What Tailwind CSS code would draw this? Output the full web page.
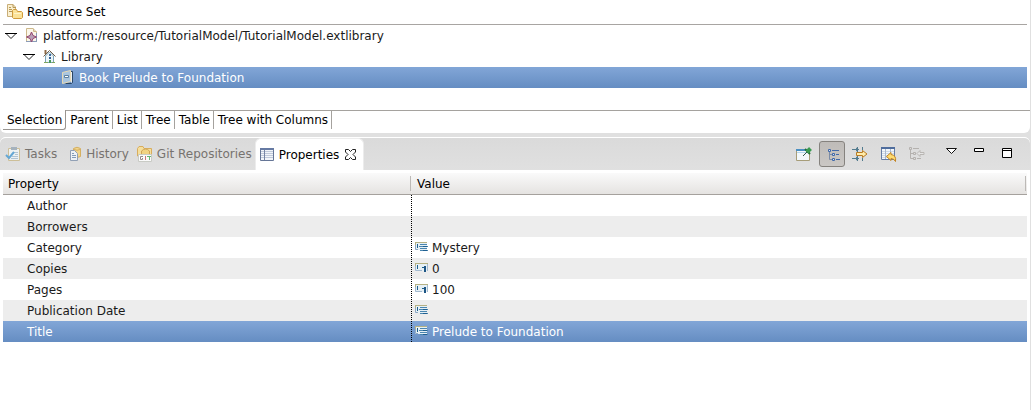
<!DOCTYPE html>
<html lang="en">
<head>
  <meta charset="UTF-8" />
  <meta name="viewport" content="width=device-width, initial-scale=1.0" />
  <title>Resource Set</title>
  <script src="https://cdn.jsdelivr.net/npm/@tailwindcss/browser@4"></script>
</head>
<body class="bg-[#e0e0e0] min-h-screen flex flex-col gap-1 pr-px font-['DejaVu_Sans',sans-serif] text-[12px] leading-5 text-[#1a1a1a] whitespace-nowrap">

  <!-- value cell icons -->
  <svg class="hidden">
    <symbol id="text-icon" viewBox="0 0 13 10">
      <rect width="12" height="8" fill="#e6f0f5" />
      <path d="M0 .5H12M.5 0V4" stroke="#b5b184" />
      <path d="M.5 3V7.500H3" fill="none" stroke="#8ea9c4" />
      <path d="M2.500 2V6" stroke="#1d5f8c" />
      <path d="M5 2.500H12M4 4.500H13M5 6.500H12M5 8.500H13" stroke="#4a86b0" />
      <path d="M8 4.500H12M8 8.500H12" stroke="#1f5f90" />
    </symbol>
    <symbol id="number-icon" viewBox="0 0 13 10">
      <rect width="13" height="8" fill="#e6f0f5" />
      <path d="M0 .5H13M.5 0V4" stroke="#b5b184" />
      <path d="M.5 3V7.500H7M12.500 1V8" fill="none" stroke="#a3bad0" />
      <path d="M2.500 2V6M7 4.500H9" stroke="#1d5f8c" />
      <path d="M9 3h2v6h-2z" fill="#1d5585" />
    </symbol>
  </svg>

  <section class="bg-white rounded-b-md h-[133px] flex flex-col">
    <h1 class="mx-[3px] pl-1 h-[25px] border-b border-[#a8a5a2] flex items-center gap-1 text-black">
      <svg class="size-4" viewBox="0 0 16 16">
        <path d="M.5 .5H6L8.500 3V12.500H.5Z" fill="#fbf0cf" stroke="#c9ae78" />
        <path d="M6 .5V3.500H9M2 3.500H4M2 5.500H5M2 7.500H5" fill="none" stroke="#b69859" />
        <path d="M5.500 13.500V6.500L6.500 5.500H9.500L10.500 7.500H14.500L15.500 8.500V13.500L14.500 14.500H6.500Z" fill="#fbe298" stroke="#d09a3c" />
        <path d="M7 9.500H14" stroke="#fff3c7" />
      </svg>
      Resource Set
    </h1>

    <ul class="mx-[3px]">
      <li class="h-[21px] pt-px pl-[2px] flex items-center">
        <svg class="w-3 h-2 mr-2" viewBox="0 0 12 8"><path d="M1 1.500L6 6.500L11 1.500" fill="#fff" stroke="#222" /><path d="M0 1.500H12" stroke="#000" /></svg>
        <svg class="size-4 mr-[2px]" viewBox="0 0 16 16">
          <path d="M1.500 .5H8L11.500 4V13.500H1.500Z" fill="#fbf7ea" stroke="#cdb88a" />
          <path d="M8.500 .5V3.500H11.500" fill="none" stroke="#cdb88a" />
          <path d="M1 13.500H12M11.500 5V13" stroke="#8a9bb8" />
          <path d="M6.500 4L8 7.500L11.500 9L8 10.500L6.500 14L5 10.500L1.500 9L5 7.500Z" fill="#b9a0b8" stroke="#94476f" />
        </svg>
        platform:/resource/TutorialModel/TutorialModel.extlibrary
      </li>
      <li class="h-[21px] pt-px pl-5 flex items-center">
        <svg class="w-3 h-2 mr-2" viewBox="0 0 12 8"><path d="M1 1.500L6 6.500L11 1.500" fill="#fff" stroke="#222" /><path d="M0 1.500H12" stroke="#000" /></svg>
        <svg class="size-4 mr-[2px]" viewBox="0 0 16 16">
          <path d="M2.500 1V5" stroke="#8d6b48" stroke-width="2" />
          <path d="M2.500 7V13.500H10.500V7L6.500 3Z" fill="#edf6fa" stroke="#7ba3b8" />
          <path d="M.5 7.500L6.500 1.500L12.500 7.500" fill="none" stroke="#6e5c48" />
          <path d="M6 5h2v2h-2z" fill="#416d9f" />
          <path d="M6 8h2v2h-2z" fill="#315d92" /><path d="M6 11h2v3h-2z" fill="#4b9a5b" />
          <path d="M1 13.500H5M9 13.500H12" stroke="#7fa65d" />
        </svg>
        Library
      </li>
      <li class="h-[21px] pt-px pl-[58px] flex items-center gap-[2px] text-white bg-linear-to-b from-[#82a6d7] to-[#658dc2]">
        <svg class="size-4" viewBox="0 0 16 16">
          <path d="M9.500 1.500H11.500V12.500L10.500 13.500H4.500" fill="none" stroke="#2c4763" />
          <path d="M1.500 2.500L9.500 .5V11.500L1.500 13.500Z" fill="#a9c5df" stroke="#e6d9b5" />
          <path d="M10.500 2V12.500" stroke="#e9eff6" />
          <path d="M3.500 5.500H7.500V7.500H3.500Z" fill="#fff" stroke="#5b7f9f" />
        </svg>
        Book Prelude to Foundation
      </li>
    </ul>

    <!-- page tabs -->
    <nav class="mt-[22px] pl-[3px] h-5 flex text-black leading-[19px]">
      <button class="h-5 pt-px pl-1 pr-[3px] border-r border-b border-[#999590] rounded-br-[3px]">Selection</button>
      <div class="grow h-[19px] border-t border-[#a5a29e] flex">
        <button class="pl-1 pr-[3px] border-r border-[#a5a29e]">Parent</button>
        <button class="pl-1 pr-[3px] border-r border-[#a5a29e]">List</button>
        <button class="pl-1 pr-[3px] border-r border-[#a5a29e]">Tree</button>
        <button class="pl-1 pr-[3px] border-r border-[#a5a29e]">Table</button>
        <button class="pl-1 pr-[3px] border-r border-[#a5a29e]">Tree with Columns</button>
      </div>
    </nav>
  </section>

  <section class="grow bg-white rounded-t-md flex flex-col">
    <header class="h-[33px] border-t border-white rounded-t-md bg-linear-to-b from-[#dadada] to-[#e0e0e0] flex justify-between">
      <nav class="flex text-[#77736f]">
        <button class="pl-[5px] flex items-center gap-1">
          <svg class="size-4" viewBox="0 0 16 16">
            <path d="M3.500 2.500H14.500V14.500H3.500Z" fill="#edf1f2" stroke="#cdbf98" />
            <path d="M6 1h6v3h-6z" fill="#a5b2bd" />
            <path d="M9 6.500H13M10 8.500H13M7 10.500H13M6 12.500H13" stroke="#b0c3d3" />
            <path d="M1 9L4 12L9 6" fill="none" stroke="#64a7d4" stroke-width="2" />
          </svg>
          Tasks
        </button>
        <button class="pl-[11px] flex items-center gap-[2px]">
          <svg class="size-4" viewBox="0 0 16 16">
            <path d="M5.500 2.500Q9 0 12.500 2.500V10.500Q9 12.500 5.500 10.500Z" fill="#f1d58c" stroke="#d4af61" />
            <path d="M6 3.500Q9 5 12 3.500" fill="none" stroke="#d4af61" />
            <path d="M2.500 4.500H6.500L9.500 7.500V14.500H2.500Z" fill="#eef2f5" stroke="#91a0b5" />
            <path d="M4 7.500H6M4 9.500H8M4 11.500H8" stroke="#829bb8" />
          </svg>
          History
        </button>
        <button class="pl-2 flex items-center gap-1">
          <svg class="size-4" viewBox="0 0 16 16">
            <path d="M.5 10V2.500L2 .5H6L7 2.500H14.500V10Z" fill="#f5df9d" stroke="#d8ad5e" />
            <path d="M4.500 8V5Q8.500 1 12.500 5V8" fill="#f1d382" stroke="#d0a557" />
            <path d="M1.500 8.500H14.500V15.500H1.500Z" fill="#fafafa" stroke="#c9cbc5" />
            <path d="M6 10.500H3.500V13.500H5.500V12" fill="none" stroke="#968b8b" />
            <path d="M8.500 10V14" stroke="#cc7777" /><path d="M10 10.500H14M12.500 10V14" stroke="#65b777" />
          </svg>
          Git Repositories
        </button>
        <button class="ml-[3px] pl-1 pr-[7px] flex items-center bg-white border-t border-l border-r border-[#ececec] rounded-t-md text-black">
          <svg class="w-[14px] h-[13px] mr-[5px]" viewBox="0 0 14 13">
            <path d="M.5 .5H13.500V12.500H.5Z" fill="#f2f5fa" stroke="#667697" />
            <path d="M0 1H14" stroke="#667aa3" stroke-width="2" />
            <path d="M1 3.500H13M1 5.500H13M1 7.500H13M1 9.500H13" stroke="#c0c9da" />
            <path d="M4.500 2V12" stroke="#7685a5" />
          </svg>
          Properties
          <svg class="size-[11px] ml-[6px]" viewBox="0 0 11 11"><path d="M.5 .5H3.500L5.500 2.500L7.500 .5H10.500V3L8 5.500L10.500 8V10.500H7.500L5.500 8.500L3.500 10.500H.5V8L3 5.500L.5 3Z" fill="#fff" stroke="#222" /></svg>
        </button>
      </nav>

      <div class="pr-[18px] flex items-center">
        <button aria-label="Pin to Selection" class="mr-[7px]">
          <svg class="size-4" viewBox="0 0 16 16">
            <path d="M.5 3.500H13.500V14.500H.5Z" fill="#f3f8fb" stroke="#a79d79" />
            <path d="M0 4H12" stroke="#4c90c2" stroke-width="2" /><path d="M1 6.500H13" stroke="#b5d7ec" />
            <path d="M7 10L11 6" stroke="#33564a" />
            <path d="M9 3L14 8" stroke="#246d38" stroke-width="2" />
            <path d="M11 6L14.500 2.500" stroke="#3a9b50" stroke-width="4" />
          </svg>
        </button>
        <button aria-label="Show Categories" class="size-[26px] mr-[7px] pl-1 pt-px flex items-center justify-center border border-[#85827e] rounded-[3px] bg-linear-to-b from-[#bebbb8] to-[#cac7c4]">
          <svg class="w-3 h-3" viewBox="0 0 12 12">
            <path d="M1.500 3V10.500H4M2 5.500H4" fill="none" stroke="#7b8ba6" />
            <path d="M.5 .5H2.500V2.500H.5ZM4.500 4.500H6.500V6.500H4.500ZM4.500 9.500H6.500V11.500H4.500Z" fill="#d9e3f3" stroke="#4169a9" />
            <path d="M4 1.500H11M8 5.500H11M8 10.500H12" stroke="#4169a9" />
          </svg>
        </button>
        <button aria-label="Show Advanced Properties" class="mr-[13px]">
          <svg class="size-4" viewBox="0 0 16 16">
            <path d="M0 3.500H7M0 12.500H7M5.500 1V6M5.500 10V15M10.500 1V4M10.500 12V15" stroke="#527b8e" />
            <path d="M4 1.500L6.500 3.500L4 5.500ZM4 10.500L6.500 12.500L4 14.500Z" fill="#527b8e" />
            <path d="M4.500 6.500H10.500V4.500L15 8L10.500 11.500V9.500H4.500Z" fill="#ffecaa" stroke="#b97b22" />
          </svg>
        </button>
        <button aria-label="Restore Default Value" class="mr-3">
          <svg class="size-4" viewBox="0 0 16 16">
            <path d="M.5 1.500H13.500V13.500H.5Z" fill="#f1f6fb" stroke="#677da4" />
            <path d="M0 2H14" stroke="#4f6d9d" stroke-width="2" />
            <path d="M1 5.500H13M1 7.500H13M1 9.500H13M1 11.500H13" stroke="#cfd9e5" /><path d="M4.500 3V13M9.500 3V13" stroke="#a9b8cf" />
            <path d="M5.500 10.500L10 6.500V8.500Q15.500 9 14.500 15.500Q13 12.500 10 12.500V14.500Z" fill="#ffdc70" stroke="#c28321" />
          </svg>
        </button>
        <button aria-label="Collapse" class="mr-[21px]" disabled>
          <svg class="size-4" viewBox="0 0 16 16">
            <path d="M1.500 4V12.500H5M2 7.500H5M4 2.500H10M8 12.500H12" fill="none" stroke="#b4b1ae" />
            <path d="M.5 1.500H2.500V3.500H.5ZM4.500 6.500H6.500V8.500H4.500ZM4.500 11.500H6.500V13.500H4.500Z" fill="#ddd" stroke="#b4b1ae" />
            <path d="M8 7.500L11 4.500V6.500H15V8.500H11V10.500Z" fill="#e5e5e5" stroke="#b9b6b3" />
          </svg>
        </button>
        <div class="h-[12px] flex items-start gap-[17px]">
          <button aria-label="View Menu"><svg class="w-[11px] h-[6px]" viewBox="0 0 11 6"><path d="M.5 .5H10.500L5.500 5.500Z" fill="#fff" stroke="#111" /></svg></button>
          <button aria-label="Minimize"><svg class="w-[11px] h-[6px]" viewBox="0 0 11 6"><path d="M.5 .5H9.500V3.500H.5Z" fill="#fff" stroke="#000" /></svg></button>
          <button aria-label="Maximize"><svg class="w-[10px] h-[11px]" viewBox="0 0 10 11"><path d="M.5 .5H9.500V9.500H.5ZM0 2.500H10" fill="#fff" stroke="#000" /></svg></button>
        </div>
      </div>
    </header>

    <div class="mt-[3px] mx-[3px] relative">
      <table class="w-full table-fixed border-separate border-spacing-0">
        <thead class="text-black">
          <tr class="h-[22px] bg-linear-to-b from-[#fafafa] to-[#e4e2e0]">
            <th class="w-[408px] p-0 border-b border-[#a5a19d] text-left font-normal"><div class="h-[15px] pl-[5px] leading-4 border-r border-[#bcb9b6]">Property</div></th>
            <th class="p-0 pr-px border-b border-[#a5a19d] text-left font-normal"><div class="h-[15px] pl-[6px] leading-4 border-r border-[#bcb9b6]">Value</div></th>
          </tr>
        </thead>
        <tbody>
          <tr class="h-[21px]">
            <td class="p-0 pt-px pl-6">Author</td>
            <td class="p-0 pt-px pl-1"></td>
          </tr>
          <tr class="h-[21px] bg-[#ededed]">
            <td class="p-0 pt-px pl-6">Borrowers</td>
            <td class="p-0 pt-px pl-1"></td>
          </tr>
          <tr class="h-[21px]">
            <td class="p-0 pt-px pl-6">Category</td>
            <td class="p-0 pt-px pl-1"><div class="h-5 flex items-center gap-1"><svg class="w-[13px] h-[10px] mb-[2px]"><use href="#text-icon" /></svg>Mystery</div></td>
          </tr>
          <tr class="h-[21px] bg-[#ededed]">
            <td class="p-0 pt-px pl-6">Copies</td>
            <td class="p-0 pt-px pl-1"><div class="h-5 flex items-center gap-1"><svg class="w-[13px] h-[10px] mb-[2px]"><use href="#number-icon" /></svg>0</div></td>
          </tr>
          <tr class="h-[21px]">
            <td class="p-0 pt-px pl-6">Pages</td>
            <td class="p-0 pt-px pl-1"><div class="h-5 flex items-center gap-1"><svg class="w-[13px] h-[10px] mb-[2px]"><use href="#number-icon" /></svg>100</div></td>
          </tr>
          <tr class="h-[21px] bg-[#ededed]">
            <td class="p-0 pt-px pl-6">Publication Date</td>
            <td class="p-0 pt-px pl-1"><div class="h-5 flex items-center gap-1"><svg class="w-[13px] h-[10px] mb-[2px]"><use href="#text-icon" /></svg></div></td>
          </tr>
          <tr class="h-[21px] text-white bg-linear-to-b from-[#82a6d7] to-[#658dc2]">
            <td class="p-0 pt-px pl-6">Title</td>
            <td class="p-0 pt-px pl-1"><div class="h-5 flex items-center gap-1"><svg class="w-[13px] h-[10px] mb-[2px]"><use href="#text-icon" /></svg>Prelude to Foundation</div></td>
          </tr>
        </tbody>
      </table>
      <!-- dotted column line over the rows -->
      <div class="absolute left-[408px] top-[22px] bottom-0 w-px bg-[repeating-linear-gradient(#000_0_1px,transparent_1px_2px)]"></div>
    </div>
  </section>

</body>
</html>
